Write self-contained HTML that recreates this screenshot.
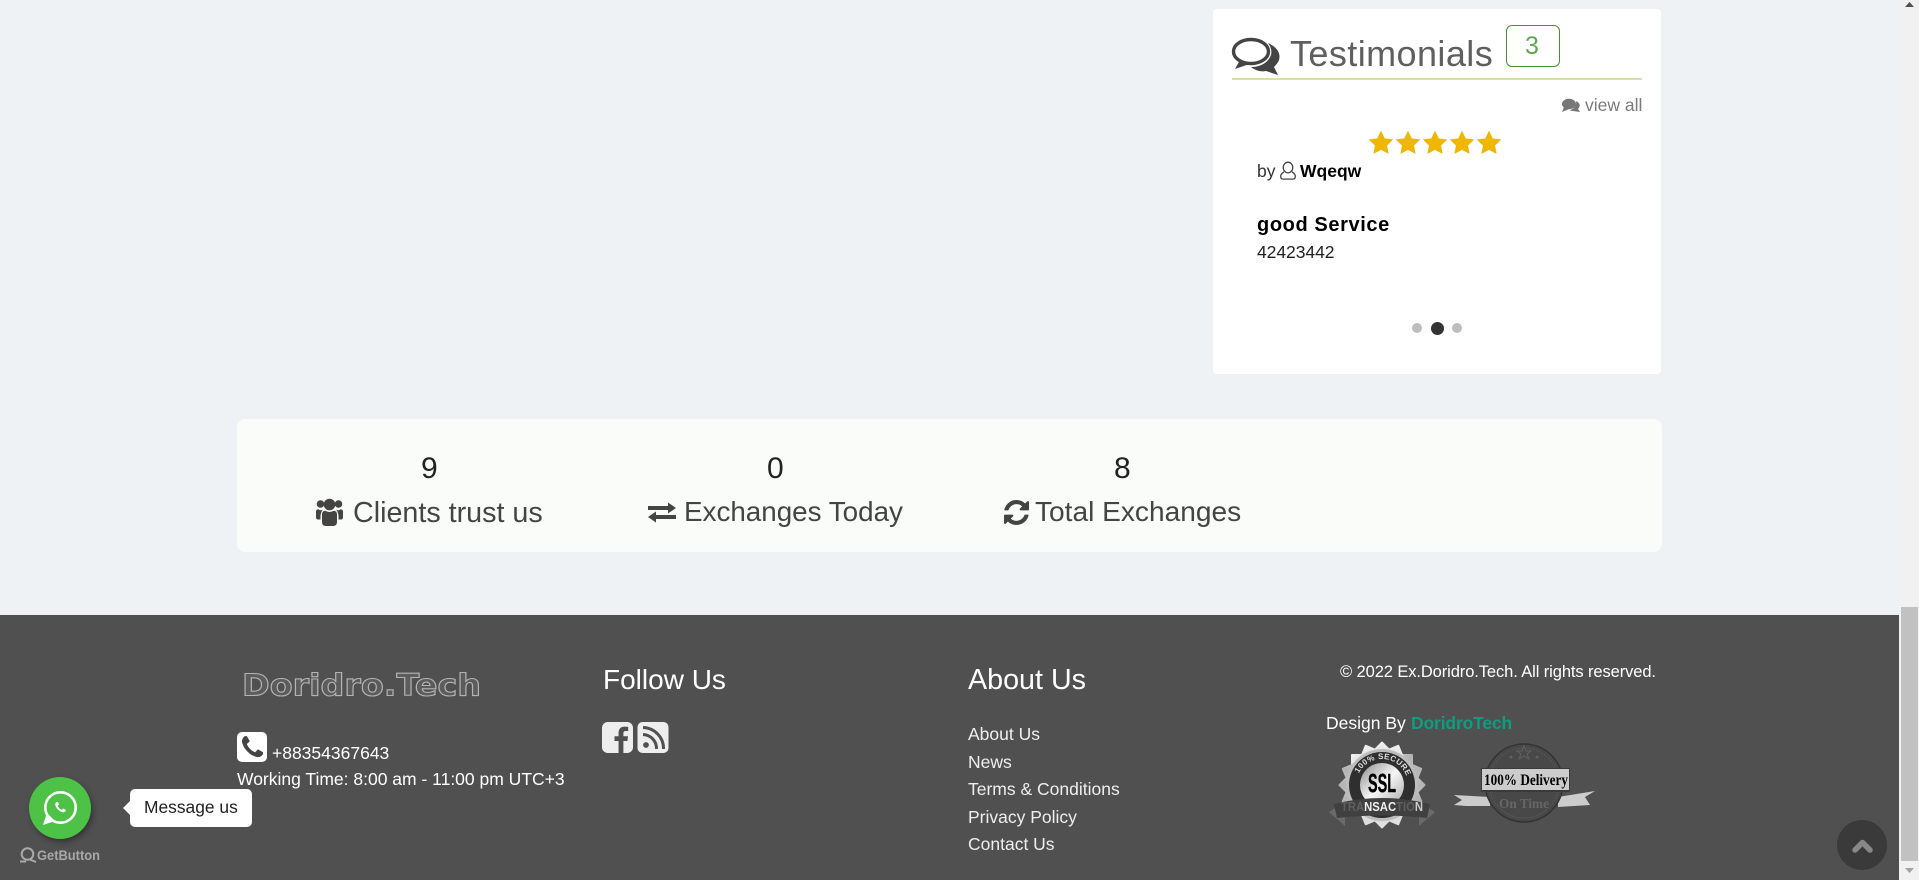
<!DOCTYPE html>
<html lang="en"><head><meta charset="utf-8"><title>Doridro.Tech</title>
<style>
html,body{margin:0;padding:0;width:1919px;height:880px;overflow:hidden;background:#eef2f5}
body{position:relative;font-family:"Liberation Sans",Arial,sans-serif;font-size:17.5px}
.b{position:absolute}
.t{position:absolute;white-space:nowrap;line-height:1}
svg{position:absolute;left:0;top:0}
</style></head><body>
<div class="b" style="left:1899px;top:0;width:20px;height:880px;background:#f1f1f1"></div>
<div class="b" style="left:1901px;top:607px;width:17px;height:254px;background:#c1c1c1"></div>
<div class="b" style="left:1213px;top:9px;width:448px;height:365px;background:#fff;border-radius:4px"></div>
<div class="b" style="left:237px;top:419px;width:1425px;height:133px;background:#fafcf9;border-radius:8px"></div>
<div class="b" style="left:0;top:615px;width:1899px;height:265px;background:#505050"></div>
<div class="b" style="left:1232px;top:78px;width:410px;height:2px;background:#d2e3a8"></div>
<div class="b" style="left:1506px;top:25px;width:52px;height:40px;border:1px solid #4a8f2f;border-radius:6px"></div>
<div class="b" style="left:237px;top:732px;width:30px;height:30px;background:#fff;border-radius:5px"></div>
<div class="b" style="left:130px;top:789px;width:122px;height:38px;background:#fff;border-radius:5px"></div>
<div class="b" style="left:29px;top:777px;width:62px;height:62px;background:#4dc247;border-radius:50%;box-shadow:2px 3px 6px rgba(0,0,0,.35)"></div>
<div class="b" style="left:1837px;top:820px;width:50px;height:50px;background:#3a3a3a;border-radius:50%"></div>

<svg width="1919" height="880" viewBox="0 0 1919 880" xmlns="http://www.w3.org/2000/svg">
<defs>
<linearGradient id="sv" x1="0" y1="0" x2="1" y2="1"><stop offset="0" stop-color="#f2f2f2"/><stop offset=".5" stop-color="#b4b4b4"/><stop offset="1" stop-color="#e4e4e4"/></linearGradient>
<linearGradient id="in" x1="0" y1="0" x2="1" y2="1"><stop offset="0" stop-color="#888"/><stop offset=".5" stop-color="#f6f6f6"/><stop offset="1" stop-color="#a5a5a5"/></linearGradient>
<path id="arc" d="M1356 785A26 26 0 0 1 1408 785" fill="none"/>
</defs>
<!-- scrollbar arrows -->
<polygon points="1909.500,2 1905,7 1914,7" fill="#505050"/>
<polygon points="1905,868 1914,868 1909.500,873" fill="#a3a3a3"/>
<!-- heading comments icon -->
<ellipse cx="1251" cy="51.500" rx="17.500" ry="12" fill="none" stroke="#444" stroke-width="3.400"/>
<path d="M1240 60L1235 69L1248 64.500Z" fill="#444"/>
<path d="M1268 43C1277 47 1281 53 1279 60C1278 63 1275 66 1274 67L1278 75L1266 71C1262 72 1256 71 1251 67C1260 67 1268 63 1271 55C1272 51 1271 47 1268 43Z" fill="#444"/>
<!-- view all icon -->
<ellipse cx="1569" cy="104" rx="7" ry="5.200" fill="#777"/>
<path d="M1564 107L1562 112L1569 109Z" fill="#777"/>
<path d="M1576 101C1580 103 1581 106 1578 109L1580 112L1573 111C1571 111 1570 110 1569 110C1573 110 1577 106 1576 101Z" fill="#777"/>
<!-- stars -->
<g fill="#efb700" stroke="#efb700" stroke-width=".8" stroke-linejoin="round">
<polygon transform="translate(1381 143.500) scale(.9)" points="0,-13.500 3.880,-5.340 12.840,-4.170 6.280,2.040 7.940,10.920 0,6.600 -7.940,10.920 -6.280,2.040 -12.840,-4.170 -3.880,-5.340"/>
<polygon transform="translate(1408 143.500) scale(.9)" points="0,-13.500 3.880,-5.340 12.840,-4.170 6.280,2.040 7.940,10.920 0,6.600 -7.940,10.920 -6.280,2.040 -12.840,-4.170 -3.880,-5.340"/>
<polygon transform="translate(1435 143.500) scale(.9)" points="0,-13.500 3.880,-5.340 12.840,-4.170 6.280,2.040 7.940,10.920 0,6.600 -7.940,10.920 -6.280,2.040 -12.840,-4.170 -3.880,-5.340"/>
<polygon transform="translate(1462 143.500) scale(.9)" points="0,-13.500 3.880,-5.340 12.840,-4.170 6.280,2.040 7.940,10.920 0,6.600 -7.940,10.920 -6.280,2.040 -12.840,-4.170 -3.880,-5.340"/>
<polygon transform="translate(1489 143.500) scale(.9)" points="0,-13.500 3.880,-5.340 12.840,-4.170 6.280,2.040 7.940,10.920 0,6.600 -7.940,10.920 -6.280,2.040 -12.840,-4.170 -3.880,-5.340"/>
</g>
<!-- user outline -->
<g fill="none" stroke="#444" stroke-width="1.300">
<ellipse cx="1288" cy="167.500" rx="4.800" ry="5.300"/>
<path d="M1284 172C1282 173 1280.700 174.500 1280.700 176.500C1280.700 178.500 1282 179.100 1283.500 179.100H1292.500C1294 179.100 1295.300 178.500 1295.300 176.500C1295.300 174.500 1294 173 1292 172"/>
</g>
<!-- dots -->
<circle cx="1417" cy="328" r="5" fill="#bdbdbd"/>
<circle cx="1437.500" cy="328.500" r="6.500" fill="#333"/>
<circle cx="1457" cy="328" r="5" fill="#bdbdbd"/>
<!-- users icon -->
<g fill="#444">
<circle cx="329.500" cy="504.500" r="5.800"/>
<path d="M322 514.500C322 511.500 324 510.500 326 511C328 512.300 331 512.300 333 511C335 510.500 337 511.500 337 514.500V522C337 525 335 526 333 526H326C324 526 322 525 322 522Z"/>
<circle cx="320.500" cy="504" r="3.800"/><circle cx="338.500" cy="504" r="3.800"/>
<path d="M316 511.500C316 509.500 317.500 509 319 509.500C320 510.500 321.500 510.500 323 509.500C321.500 511.500 320.500 513.500 320.500 516.500V519.500H318C316.500 519.500 316 518.500 316 517.500Z"/>
<path d="M343 511.500C343 509.500 341.500 509 340 509.500C339 510.500 337.500 510.500 336 509.500C337.500 511.500 338.500 513.500 338.500 516.500V519.500H341C342.500 519.500 343 518.500 343 517.500Z"/>
</g>
<!-- exchange icon -->
<g fill="#444">
<path d="M648 506H668V502.500L676 508L668 513.500V510H648Z"/>
<path d="M676 515H656V511.500L648 517L656 522.500V519H676Z"/>
</g>
<!-- refresh icon -->
<path transform="translate(1001.900 497.900) scale(.0163)" fill="#444" d="M1639 1056q0 5-1 7-64 268-268 434.500t-478 166.500q-146 0-282.500-55t-243.500-157l-129 129q-19 19-45 19t-45-19-19-45v-448q0-26 19-45t45-19h448q26 0 45 19t19 45-19 45l-137 137q71 66 161 102t187 36q134 0 250-65t186-179q11-17 53-117 8-23 30-23h192q13 0 22.500 9.500t9.500 22.500zm25-800v448q0 26-19 45t-45 19h-448q-26 0-45-19t-19-45 19-45l138-138q-148-137-349-137-134 0-250 65t-186 179q-11 17-53 117-8 23-30 23h-199q-13 0-22.500-9.500t-9.500-22.500v-7q65-268 270-434.500t480-166.500q146 0 284 55.500t245 156.500l130-129q19-19 45-19t45 19 19 45z"/>
<!-- logo -->
<text x="242" y="695.500" font-family="DejaVu Sans" font-weight="700" font-size="30" textLength="239" lengthAdjust="spacingAndGlyphs" fill="#5c5c5c" stroke="#b4b4b4" stroke-width="1.100">Doridro.Tech</text>
<!-- phone -->
<path transform="translate(239.100 734.100) scale(.015)" fill="#444" d="M1600 1240q0 27-10 70.500t-21 68.500q-21 50-122 106-94 51-186 51-27 0-53-3.500t-57.500-12.500-47-14.500-55.500-20.500-49-18q-98-35-175-83-127-79-264-216t-216-264q-48-77-83-175-3-9-18-49t-20.500-55.500-14.500-47-12.500-57.500-3.500-53q0-92 51-186 56-101 106-122 25-11 68.500-21t70.500-10q14 0 21 3 18 6 53 76 11 19 30 54t35 63.500 31 53.500q3 4 17.500 25t21.500 35.500 7 28.500q0 20-28.500 50t-62 55-62 53-28.500 46q0 9 5 22.500t8.500 20.500 14 24 11.500 19q76 137 174 235t235 174q2 1 19 11.500t24 14 20.500 8.500 22.500 5q18 0 46-28.500t53-62 55-62 50-28.500q14 0 28.500 7t35.500 21.500 25 17.500q25 15 53.500 31t63.500 35 54 30q70 35 76 53 3 7 3 21z"/>
<!-- tooltip arrow -->
<polygon points="123,808 130,801 130,815" fill="#fff"/>
<!-- whatsapp -->
<circle cx="60.500" cy="807.500" r="15.200" fill="none" stroke="#fff" stroke-width="2.600"/>
<polygon points="47,813 43,825 55,821" fill="#fff"/>
<path transform="translate(53.800 800.800) scale(.0075)" fill="#fff" d="M1600 1240q0 27-10 70.500t-21 68.500q-21 50-122 106-94 51-186 51-27 0-53-3.500t-57.500-12.500-47-14.500-55.500-20.500-49-18q-98-35-175-83-127-79-264-216t-216-264q-48-77-83-175-3-9-18-49t-20.500-55.500-14.500-47-12.500-57.500-3.500-53q0-92 51-186 56-101 106-122 25-11 68.500-21t70.500-10q14 0 21 3 18 6 53 76 11 19 30 54t35 63.500 31 53.500q3 4 17.500 25t21.500 35.500 7 28.500q0 20-28.500 50t-62 55-62 53-28.500 46q0 9 5 22.500t8.500 20.500 14 24 11.500 19q76 137 174 235t235 174q2 1 19 11.500t24 14 20.500 8.500 22.500 5q18 0 46-28.500t53-62 55-62 50-28.500q14 0 28.500 7t35.500 21.500 25 17.500q25 15 53.500 31t63.500 35 54 30q70 35 76 53 3 7 3 21z"/>
<!-- getbutton -->
<circle cx="27.500" cy="854" r="5.800" fill="none" stroke="#aaa" stroke-width="2"/>
<path d="M20 861.500H26M30 859.500L36 862" fill="none" stroke="#aaa" stroke-width="2"/>
<text x="37" y="860" font-family="Liberation Sans" font-weight="700" font-size="13.500" textLength="63" lengthAdjust="spacingAndGlyphs" fill="#a8a8a8">GetButton</text>
<!-- facebook -->
<path transform="translate(599.400 719.400) scale(.0202)" fill="#eee" d="M1376 128q119 0 203.500 84.500t84.500 203.500v960q0 119-84.500 203.500t-203.500 84.500h-188v-595h199l30-232h-229v-148q0-56 23.500-84t91.500-28l122-1v-207q-63-9-178-9-136 0-217.500 80t-81.500 226v171h-200v232h200v595h-532q-119 0-203.500-84.500t-84.500-203.500v-960q0-119 84.500-203.500t203.500-84.500h960z"/>
<!-- rss -->
<rect x="637.500" y="722" width="31" height="31" rx="5" fill="#eee"/>
<circle cx="646" cy="745" r="2.900" fill="#505050"/>
<path d="M643 734.500A14 14 0 0 1 656.500 749M643 727.500A21 21 0 0 1 663.500 749" fill="none" stroke="#505050" stroke-width="3"/>
<!-- scroll top -->
<path d="M1855 850L1862.500 842.500L1870 850" fill="none" stroke="#888" stroke-width="5.500" stroke-linecap="round" stroke-linejoin="round"/>
<!-- SSL badge -->
<g>
<polygon points="1329,812 1345,802 1345,826" fill="#6a6a6a"/>
<polygon points="1435,812 1419,802 1419,826" fill="#6a6a6a"/>
<g fill="url(#sv)">
<rect x="1351" y="754" width="62" height="62" rx="1"/>
<rect x="1351" y="754" width="62" height="62" rx="1" transform="rotate(22.500 1382 785)"/>
<rect x="1351" y="754" width="62" height="62" rx="1" transform="rotate(45 1382 785)"/>
<rect x="1351" y="754" width="62" height="62" rx="1" transform="rotate(67.500 1382 785)"/>
</g>
<circle cx="1382" cy="785" r="36" fill="#bcbcbc"/>
<circle cx="1382" cy="785" r="33" fill="#2f2f2f"/>
<circle cx="1382" cy="785" r="22" fill="url(#in)"/>
<text font-family="Liberation Sans" font-weight="700" font-size="8" fill="#ddd"><textPath href="#arc" startOffset="12" textLength="60">100% SECURE</textPath></text>
<text x="1368" y="792" font-family="Liberation Sans" font-weight="700" font-size="26" textLength="28" lengthAdjust="spacingAndGlyphs" fill="#000" stroke="#000" stroke-width=".4">SSL</text>
<path d="M1334 804Q1382 792 1430 804L1427 818Q1382 813 1337 818Z" fill="#404040"/>
<text x="1341" y="811" font-family="Liberation Sans" font-weight="700" font-size="12.500" textLength="82" lengthAdjust="spacingAndGlyphs" fill="#5e5e5e">TRA<tspan fill="#eee">NSAC</tspan>T<tspan fill="#5e5e5e">IO</tspan><tspan fill="#ccc">N</tspan></text>
</g>
<!-- Delivery badge -->
<g>
<polygon points="1454,795 1490,797 1490,806 1466,806 1454,805 1462,800" fill="#ccc"/>
<polygon points="1595,791 1558,797 1558,807 1590,805 1585,797" fill="#ccc"/>
<circle cx="1524" cy="783" r="39" fill="#484848" stroke="#333" stroke-width="1.500"/>
<circle cx="1524" cy="783" r="35" fill="none" stroke="#5c5c5c" stroke-width="1" stroke-dasharray="1.500 1.500"/>
<polygon points="1524,746 1526,751 1531,751 1527,754 1529,759 1524,756 1519,759 1521,754 1517,751 1522,751" fill="none" stroke="#606060"/>
<circle cx="1511" cy="757" r="1.500" fill="#606060"/><circle cx="1537" cy="757" r="1.500" fill="#606060"/>
<rect x="1481" y="768" width="89" height="24" fill="#3a3a3a"/>
<rect x="1482" y="769" width="87" height="21" fill="#cccccc"/>
<text x="1484" y="785" font-family="Liberation Serif" font-weight="700" font-size="15.500" textLength="84" lengthAdjust="spacingAndGlyphs" fill="#000">100% Delivery</text>
<text x="1499" y="808" font-family="Liberation Serif" font-weight="700" font-size="14" textLength="50" lengthAdjust="spacingAndGlyphs" fill="#666">On Time</text>
</g>
</svg>

<span class="t" style="left:1290px;top:35.500px;font-size:36px;letter-spacing:.42px;color:#5f5f5f">Testimonials</span>
<span class="t" style="left:1525px;top:33.800px;font-size:25px;color:#62a552">3</span>
<a class="t" style="left:1585px;top:97.200px;color:#7a7a7a">view all</a>
<span class="t" style="left:1257px;top:163px;color:#333">by</span>
<b class="t" style="left:1300px;top:163px;color:#000">Wqeqw</b>
<b class="t" style="left:1257px;top:215px;font-size:20px;letter-spacing:.6px;color:#000">good Service</b>
<span class="t" style="left:1257px;top:244.200px;color:#222;letter-spacing:-.05px">42423442</span>

<span class="t" style="left:421px;top:453.600px;font-size:30px;color:#222">9</span>
<span class="t" style="left:767px;top:453.600px;font-size:30px;color:#222">0</span>
<span class="t" style="left:1114px;top:453.600px;font-size:30px;color:#222">8</span>
<span class="t" style="left:353px;top:498.500px;font-size:28.700px;color:#444">Clients trust us</span>
<span class="t" style="left:684px;top:498.400px;font-size:27.800px;color:#444">Exchanges Today</span>
<span class="t" style="left:1035px;top:498.400px;font-size:28.100px;color:#444">Total Exchanges</span>

<span class="t" style="left:272px;top:745.200px;color:#fff">+88354367643</span>
<span class="t" style="left:237px;top:770.700px;color:#fff">Working Time: 8:00 am - 11:00 pm UTC+3</span>
<span class="t" style="left:144px;top:799.200px;font-size:17.400px;color:#222">Message us</span>

<span class="t" style="left:603px;top:665.500px;font-size:28px;color:#fff">Follow Us</span>
<span class="t" style="left:968px;top:665.700px;font-size:28.700px;color:#fff">About Us</span>
<a class="t" style="left:968px;top:726.200px;color:#eee">About Us</a>
<a class="t" style="left:968px;top:754.200px;color:#eee">News</a>
<a class="t" style="left:968px;top:781.200px;color:#eee">Terms &amp; Conditions</a>
<a class="t" style="left:968px;top:809.200px;color:#eee">Privacy Policy</a>
<a class="t" style="left:968px;top:836.200px;color:#eee">Contact Us</a>

<span class="t" style="left:1340px;top:663.500px;font-size:16.500px;letter-spacing:-.1px;color:#fff">© 2022 Ex.Doridro.Tech. All rights reserved.</span>
<span class="t" style="left:1326px;top:714.500px;color:#fff">Design By</span>
<b class="t" style="left:1411px;top:714.500px;letter-spacing:-.15px;color:#0e9d80">DoridroTech</b>
</body></html>
